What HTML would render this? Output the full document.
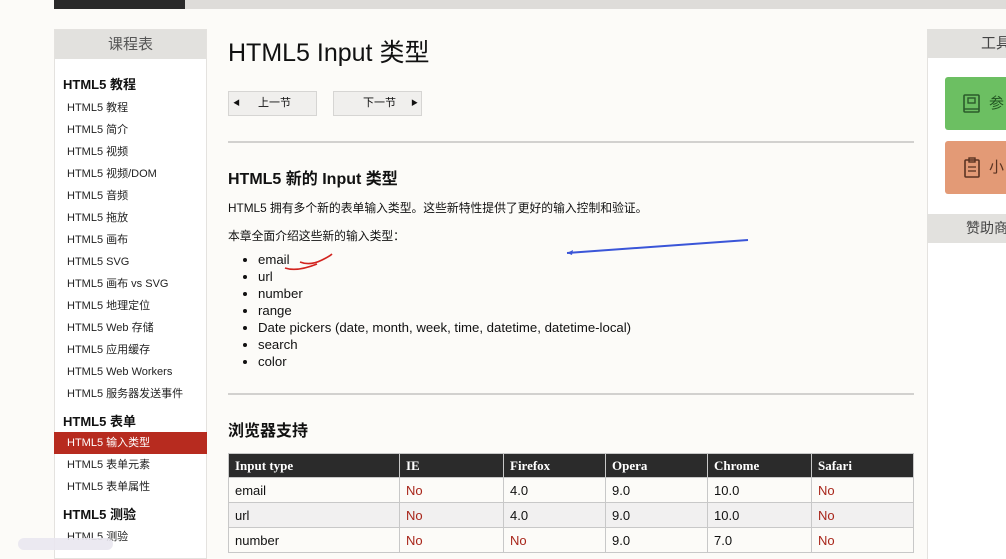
<!DOCTYPE html>
<html><head><meta charset="utf-8"><style>
*{margin:0;padding:0;box-sizing:border-box}
body{width:1006px;height:555px;overflow:hidden;background:#fcfbf8;font-family:"Liberation Sans","Noto Sans CJK SC",sans-serif;color:#111;position:relative}
.a{position:absolute;white-space:nowrap}
.side div.i{position:absolute;left:12px;font-size:11px;color:#222;line-height:14px;margin-top:2px}
.side div.h{position:absolute;left:8px;font-size:13px;font-weight:bold;line-height:16px;margin-top:2px}
table{border-collapse:collapse;position:absolute;left:228px;top:453px;width:686px;font-size:13px;font-family:"Liberation Sans Narrow","Liberation Sans",sans-serif}
td,th{height:25px;padding:0 6px;text-align:left;border:1px solid #c8c8c8}
th{background:#2b2b2b;color:#fff;font-family:"Liberation Serif",serif;font-weight:bold;font-size:13px;height:24px}
tr:nth-child(3) td{background:#f1f0f0}
.no{color:#a8251a}
li{margin-left:30px;font-size:13.2px;height:17px;line-height:17px}
</style></head><body>
<div class="a" style="left:54px;top:0;width:131px;height:9px;background:#2a2a2a"></div>
<div class="a" style="left:185px;top:0;width:821px;height:9px;background:#dedcd9"></div>

<div class="a side" style="left:54px;top:29px;width:153px;height:530px;background:#fff;border:1px solid #e4e2df">
<div class="a" style="left:0;top:0;width:151px;height:29px;background:#e2e1de;text-align:center;line-height:29px;font-size:15px;color:#555">课程表</div>
<div class="h" style="top:45px">HTML5 教程</div>
<div class="i" style="top:69px">HTML5 教程</div>
<div class="i" style="top:91px">HTML5 简介</div>
<div class="i" style="top:113px">HTML5 视频</div>
<div class="i" style="top:135px">HTML5 视频/DOM</div>
<div class="i" style="top:157px">HTML5 音频</div>
<div class="i" style="top:179px">HTML5 拖放</div>
<div class="i" style="top:201px">HTML5 画布</div>
<div class="i" style="top:223px">HTML5 SVG</div>
<div class="i" style="top:245px">HTML5 画布 vs SVG</div>
<div class="i" style="top:267px">HTML5 地理定位</div>
<div class="i" style="top:289px">HTML5 Web 存储</div>
<div class="i" style="top:311px">HTML5 应用缓存</div>
<div class="i" style="top:333px">HTML5 Web Workers</div>
<div class="i" style="top:355px">HTML5 服务器发送事件</div>
<div class="h" style="top:382px">HTML5 表单</div>
<div class="a" style="left:-1px;top:402px;width:153px;height:22px;background:#b72b1f"></div>
<div class="i" style="top:404px;color:#fff">HTML5 输入类型</div>
<div class="i" style="top:426px">HTML5 表单元素</div>
<div class="i" style="top:448px">HTML5 表单属性</div>
<div class="h" style="top:475px">HTML5 测验</div>
<div class="i" style="top:498px">HTML5 测验</div>
</div>
<div class="a" style="left:18px;top:538px;width:95px;height:12px;background:#e9e7f0;border-radius:6px;opacity:.9"></div>

<div class="a" style="left:228px;top:37px;font-size:25px;line-height:32px">HTML5 Input 类型</div>
<div class="a" style="left:228px;top:91px;width:89px;height:25px;background:#f0efed;border:1px solid #d6d5d3;font-size:11px;line-height:23px"><span style="position:absolute;left:4px;font-size:7px">◀</span><span style="position:absolute;left:29px">上一节</span></div>
<div class="a" style="left:333px;top:91px;width:89px;height:25px;background:#f0efed;border:1px solid #d6d5d3;font-size:11px;line-height:23px"><span style="position:absolute;left:29px">下一节</span><span style="position:absolute;right:3px;font-size:7px">▶</span></div>
<div class="a" style="left:228px;top:141px;width:686px;height:2px;background:#d2d1cf"></div>
<div class="a" style="left:228px;top:170px;font-size:16px;font-weight:bold;line-height:20px">HTML5 新的 Input 类型</div>
<div class="a" style="left:228px;top:200px;font-size:11.8px;line-height:16px">HTML5 拥有多个新的表单输入类型。这些新特性提供了更好的输入控制和验证。</div>
<div class="a" style="left:228px;top:228px;font-size:11.8px;line-height:16px">本章全面介绍这些新的输入类型：</div>
<ul class="a" style="left:228px;top:251px;width:600px">
<li>email</li><li>url</li><li>number</li><li>range</li><li>Date pickers (date, month, week, time, datetime, datetime-local)</li><li>search</li><li>color</li></ul>
<svg class="a" style="left:0;top:0" width="1006" height="555">
<path d="M567 253 L748 240" stroke="#3a55d8" stroke-width="2" fill="none"/>
<path d="M567 253 l6 -3 l-1 5z" fill="#3a55d8"/>
<path d="M300 262 q10 4 22 -2 q8 -4 10 -6 M285 268 q12 4 32 -4" stroke="#d2231e" stroke-width="1.6" fill="none"/>
</svg>
<div class="a" style="left:228px;top:393px;width:686px;height:2px;background:#d2d1cf"></div>
<div class="a" style="left:228px;top:422px;font-size:16px;font-weight:bold;line-height:20px">浏览器支持</div>
<table>
<tr><th style="width:171px">Input type</th><th style="width:104px">IE</th><th style="width:102px">Firefox</th><th style="width:102px">Opera</th><th style="width:104px">Chrome</th><th>Safari</th></tr>
<tr><td>email</td><td class="no">No</td><td>4.0</td><td>9.0</td><td>10.0</td><td class="no">No</td></tr>
<tr><td>url</td><td class="no">No</td><td>4.0</td><td>9.0</td><td>10.0</td><td class="no">No</td></tr>
<tr><td>number</td><td class="no">No</td><td class="no">No</td><td>9.0</td><td>7.0</td><td class="no">No</td></tr>
</table>

<div class="a" style="left:927px;top:29px;width:79px;height:530px;background:#fff;border-left:1px solid #e4e2df"></div>
<div class="a" style="left:927px;top:29px;width:79px;height:29px;background:#e2e1de;font-size:15px;line-height:29px;color:#444;padding-left:54px;overflow:hidden">工具</div>
<div class="a" style="left:945px;top:77px;width:61px;height:53px;background:#6cbf62;border-radius:3px 0 0 3px;font-size:15px;line-height:53px;color:#225522;padding-left:44px;overflow:hidden">参</div>
<svg class="a" style="left:962px;top:93px" width="20" height="22"><rect x="2" y="2" width="15" height="17" rx="1" fill="none" stroke="#2b5b2b" stroke-width="1.6"/><rect x="6" y="5" width="7" height="5" fill="none" stroke="#2b5b2b" stroke-width="1.4"/><line x1="2" y1="16" x2="17" y2="16" stroke="#2b5b2b" stroke-width="1.4"/></svg>
<div class="a" style="left:945px;top:141px;width:61px;height:53px;background:#e39a76;border-radius:3px 0 0 3px;font-size:15px;line-height:53px;color:#5a3322;padding-left:44px;overflow:hidden">小</div>
<svg class="a" style="left:962px;top:157px" width="20" height="22"><rect x="3" y="3" width="14" height="17" rx="1" fill="none" stroke="#5a3322" stroke-width="1.6"/><rect x="7" y="1" width="6" height="4" fill="none" stroke="#5a3322" stroke-width="1.4"/><line x1="6" y1="10" x2="14" y2="10" stroke="#5a3322" stroke-width="1.3"/><line x1="6" y1="14" x2="14" y2="14" stroke="#5a3322" stroke-width="1.3"/></svg>
<div class="a" style="left:927px;top:214px;width:79px;height:29px;background:#e2e1de;font-size:14px;line-height:29px;color:#444;padding-left:39px;overflow:hidden">赞助商</div>
</body></html>
